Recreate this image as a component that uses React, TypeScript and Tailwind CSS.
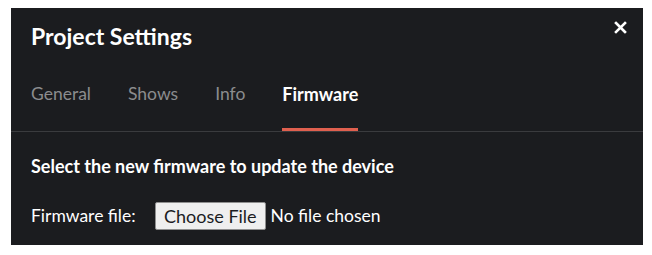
import React from "react";

export default function App() {
  const tabs = ["General", "Shows", "Info", "Firmware"];
  return (
    <div
      className="w-[652px] h-[255px] bg-white pt-[8px] pl-[11px]"
      style={{ fontFamily: '"Lato", "Noto Sans", sans-serif' }}
    >
      <div className="relative w-[632px] h-[237px] bg-[#1b1c1f] flex flex-col">
        <button className="absolute right-[16px] top-[13px] text-white">
          <svg width="13" height="13" viewBox="0 0 13 13">
            <path d="M2 2 L11 11 M11 2 L2 11" stroke="#fff" strokeWidth="2.6" strokeLinecap="square" />
          </svg>
        </button>
        <div className="pl-[20px] pt-[13px] h-[54px] text-white font-bold text-[23px] leading-[30px]">
          Project Settings
        </div>
        <div className="flex pl-[20px] gap-[37px] h-[70px] items-start border-b border-[#3a3b3e]">
          {tabs.map((t) => (
            <div
              key={t}
              className={
                "h-full pt-[20px] leading-[24px] " +
                (t === "Firmware"
                  ? "text-[18px] text-white font-bold border-b-[3px] border-[#e0604f]"
                  : "text-[17.5px] text-[#8b8c8e]")
              }
            >
              {t}
            </div>
          ))}
        </div>
        <div className="px-[20px] pt-[22px] text-white">
          <div className="font-bold text-[18px] leading-[24px]">
            Select the new firmware to update the device
          </div>
          <div className="flex items-center mt-[24px] text-[17.5px]">
            <span className="w-[124px]">Firmware file:</span>
            <span className="h-[28px] px-[8px] flex items-center bg-[#efefef] border border-[#8f8f8f] rounded-[2px] text-[#1b1c1f] text-[18px]">
              Choose File
            </span>
            <span className="ml-[5px]">No file chosen</span>
          </div>
        </div>
      </div>
    </div>
  );
}
